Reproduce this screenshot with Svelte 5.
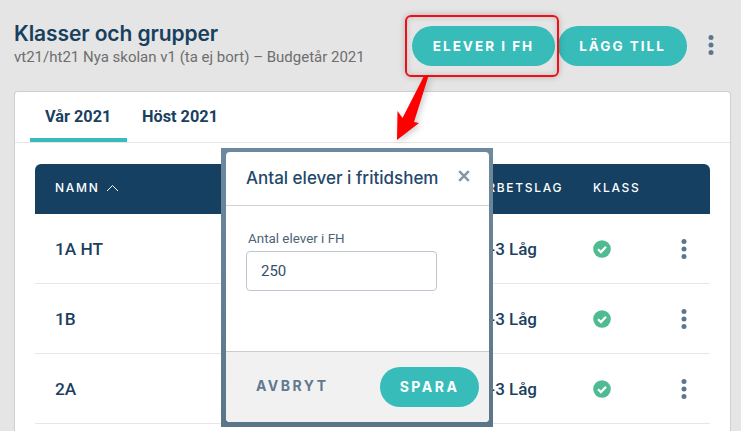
<script lang="ts">
	const rows = [
		{ name: '1A HT', team: 'F-3 Låg' },
		{ name: '1B', team: 'F-3 Låg' },
		{ name: '2A', team: 'F-3 Låg' }
	];
</script>

{#snippet kebab()}
	<svg class="kebab" width="6" height="20" viewBox="0 0 6 20" aria-hidden="true">
		<circle cx="3" cy="2.6" r="2.5" />
		<circle cx="3" cy="10" r="2.5" />
		<circle cx="3" cy="17.4" r="2.5" />
	</svg>
{/snippet}

<div class="page">
	<header class="top">
		<div class="titles">
			<h1>Klasser och grupper</h1>
			<p>vt21/ht21 Nya skolan v1 (ta ej bort) – Budgetår 2021</p>
		</div>
		<div class="actions">
			<button class="btn fh">ELEVER I FH</button>
			<button class="btn add">LÄGG TILL</button>
			<span class="top-menu">{@render kebab()}</span>
		</div>
	</header>

	<section class="card">
		<nav class="tabs">
			<span class="tab active">Vår 2021</span>
			<span class="tab">Höst 2021</span>
		</nav>
		<div class="table">
			<div class="row head">
				<span class="name">NAMN
					<svg width="13" height="8" viewBox="0 0 13 8" aria-hidden="true"><path d="M1 7l5.5-5.5L12 7" /></svg>
				</span>
				<span>ARBETSLAG</span>
				<span>KLASS</span>
				<span></span>
			</div>
			{#each rows as r (r.name)}
				<div class="row">
					<span class="name">{r.name}</span>
					<span class="team">{r.team}</span>
					<span class="check">
						<svg width="18" height="18" viewBox="0 0 18 18" aria-hidden="true">
							<circle cx="9" cy="9" r="8.8" />
							<path d="M5 9.3l2.9 2.8L13 6.8" />
						</svg>
					</span>
					<span class="menu">{@render kebab()}</span>
				</div>
			{/each}
		</div>
	</section>

	<div class="modal-frame">
		<div class="modal">
			<div class="modal-head">
				<h2>Antal elever i fritidshem</h2>
				<svg class="close" width="12" height="12" viewBox="0 0 12 12" aria-hidden="true"><path d="M1.2 1.2l9.6 9.6M10.8 1.2l-9.6 9.6" /></svg>
			</div>
			<div class="modal-body">
				<label for="fh">Antal elever i FH</label>
				<input id="fh" value="250" />
			</div>
			<div class="modal-foot">
				<button class="cancel">AVBRYT</button>
				<button class="btn save">SPARA</button>
			</div>
		</div>
	</div>

	<div class="callout"></div>
	<svg class="arrow" width="36" height="66" viewBox="0 0 36 66" aria-hidden="true">
		<path d="M31 0L35.5 0L21 46L26 47L4 64L4.5 35L9.5 42Z" />
	</svg>
</div>

<style>
	:global(body) {
		margin: 0;
		background: #e5e5e5;
	}
	.page {
		position: relative;
		width: 741px;
		height: 431px;
		overflow: hidden;
		background: #e5e5e5;
		font-family: Roboto, sans-serif;
		color: #1b3f60;
	}
	.top {
		display: flex;
		justify-content: space-between;
		height: 91px;
		box-sizing: border-box;
		padding: 22px 26px 0 14px;
	}
	h1 {
		margin: 0;
		font: 600 21px/24px Inter, sans-serif;
		letter-spacing: -0.1px;
		color: #17405f;
	}
	.titles p {
		margin: 1px 0 0;
		font-size: 15px;
		line-height: 20px;
		color: #6e6e6e;
	}
	.actions {
		display: flex;
		align-items: flex-start;
		gap: 3px;
		padding-top: 4px;
		margin-right: 1px;
	}
	.btn {
		height: 40px;
		border: 0;
		border-radius: 20px;
		background: #37bcb9;
		color: #fff;
		font: 700 13.5px Inter, sans-serif;
		letter-spacing: 2px;
		padding: 0;
	}
	.fh {
		width: 143px;
	}
	.add {
		width: 129px;
	}
	.top-menu {
		margin: 9px 0 0 18px;
		width: 6px;
	}
	.kebab {
		display: block;
		fill: #5d7690;
	}
	.card {
		margin-left: 14px;
		width: 717px;
		height: 340px;
		box-sizing: border-box;
		background: #fff;
		border: 1px solid #cfcfcf;
		border-bottom: 0;
		border-radius: 4px 4px 0 0;
	}
	.tabs {
		display: flex;
		height: 50px;
		padding-left: 15px;
		border-bottom: 1px solid #e6e6e6;
	}
	.tab {
		box-sizing: border-box;
		height: 50px;
		padding: 15px 15px 0;
		font-weight: 700;
		font-size: 16.3px;
		line-height: 20px;
		color: #1b3f60;
	}
	.tab.active {
		width: 97px;
		border-bottom: 4px solid #37bcb9;
	}
	.table {
		margin: 21px 20px 0;
	}
	.row {
		display: grid;
		grid-template-columns: 442px 116px 1fr 50px;
		align-items: center;
		height: 70px;
		box-sizing: border-box;
		border-bottom: 1px solid #e6e6e6;
		font-size: 17.3px;
		font-weight: 500;
	}
	.row.head {
		height: 50px;
		border-bottom: 0;
		border-radius: 6px 6px 0 0;
		background: #164061;
		color: #fff;
		font: 500 12px Inter, sans-serif;
		letter-spacing: 1.7px;
		padding-bottom: 4px;
	}
	.name {
		padding-left: 20px;
	}
	.team {
		padding-left: 3px;
		font-size: 17px;
	}
	.head svg {
		margin-left: 2px;
		fill: none;
		stroke: #fff;
		stroke-width: 1;
	}
	.check {
		line-height: 0;
	}
	.check circle {
		fill: #4fbb93;
	}
	.check path {
		fill: none;
		stroke: #fff;
		stroke-width: 2.2;
	}
	.menu {
		line-height: 0;
		padding-left: 21px;
	}
	.modal-frame {
		position: absolute;
		left: 221px;
		top: 148px;
		width: 272px;
		height: 279px;
		box-sizing: border-box;
		padding: 4px 4px 5px 5px;
		background: linear-gradient(#6e889d, #5b7589);
	}
	.modal {
		display: flex;
		flex-direction: column;
		height: 100%;
		overflow: hidden;
		border-radius: 4px;
		background: #fff;
	}
	.modal-head {
		display: flex;
		align-items: center;
		justify-content: space-between;
		height: 54px;
		flex: none;
		box-sizing: border-box;
		padding: 0 20px 2px;
		border-bottom: 1px solid #cfd3d7;
	}
	h2 {
		margin: 0;
		font: 500 17px Inter, sans-serif;
		color: #24486a;
	}
	.close {
		margin: -4px -1px 0 0;
		fill: none;
		stroke: #8595a4;
		stroke-width: 2.4;
	}
	.modal-body {
		flex: 1;
		padding: 24px 20px 0;
	}
	label {
		display: block;
		margin: 0 0 4px 2px;
		font-size: 13.4px;
		line-height: 17px;
		color: #4d6377;
	}
	input {
		display: block;
		box-sizing: border-box;
		width: 191px;
		height: 40px;
		padding: 0 14px;
		border: 1px solid #bcc6d0;
		border-radius: 4px;
		font: 400 15px Roboto, sans-serif;
		color: #36506a;
		background: #fff;
	}
	.modal-foot {
		display: flex;
		align-items: center;
		justify-content: space-between;
		height: 71px;
		flex: none;
		box-sizing: border-box;
		padding: 0 10px 0 30px;
		border-top: 1px solid #c9cdd1;
		background: #f1f1f1;
	}
	.cancel {
		border: 0;
		padding: 0 0 3px;
		background: none;
		font: 700 14px Inter, sans-serif;
		letter-spacing: 2.5px;
		color: #5f7990;
	}
	.save {
		width: 99px;
		padding-bottom: 2px;
		font-size: 14px;
		letter-spacing: 2.5px;
	}
	.callout {
		position: absolute;
		left: 405px;
		top: 15px;
		width: 154px;
		height: 62px;
		box-sizing: border-box;
		border: 2px solid #f30d14;
		border-radius: 6px;
		box-shadow: 0 0 6px rgba(0, 0, 0, 0.22), inset 0 0 6px rgba(0, 0, 0, 0.14);
	}
	.arrow {
		position: absolute;
		left: 393px;
		top: 76px;
		fill: #fe0000;
		filter: drop-shadow(2px 2px 3px rgba(0, 0, 0, 0.2));
	}
</style>
